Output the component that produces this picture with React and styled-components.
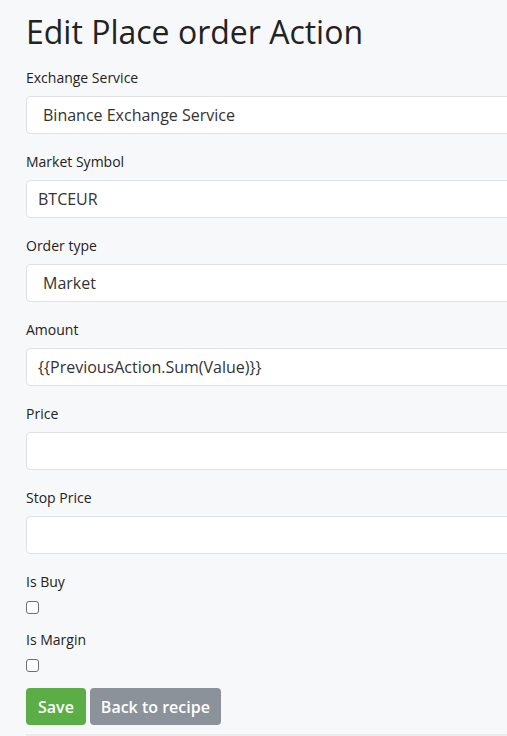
import React from "react"
import styled, { createGlobalStyle } from "styled-components"

const GlobalStyle = createGlobalStyle`
    html, body {
        margin: 0;
        padding: 0;
        background: #f7f8fa;
        font-family: "Open Sans", "Liberation Sans", sans-serif;
        color: #212529;
        overflow-x: hidden;
    }
    * {
        box-sizing: border-box;
    }
`

const Page = styled.div`
    padding: 9px 0 0 26px;
    width: 620px;
    min-height: 736px;
`

const Title = styled.h1`
    margin: 0 0 12px;
    font-size: 32px;
    font-weight: 400;
    line-height: 46px;
    color: #222;
`

const Group = styled.div`
    margin-bottom: ${(props) => props.$gap || "17px"};
`

const Label = styled.label`
    display: block;
    font-size: 14px;
    line-height: 21px;
    margin-bottom: ${(props) => (props.$check ? "9px" : "8px")};
    color: #222;
`

const Field = styled.input`
    display: block;
    width: 100%;
    height: 38px;
    padding: 0 11px;
    font-family: inherit;
    font-size: 16px;
    color: #333;
    background: #fff;
    border: 1px solid #dfe1e4;
    border-radius: 4px;
    outline: none;
`

const Select = styled.select`
    display: block;
    width: 100%;
    height: 38px;
    padding: 0 0 0 16px;
    font-family: inherit;
    font-size: 16px;
    color: #333;
    background: #fff;
    border: 1px solid #dfe1e4;
    border-radius: 4px;
    appearance: none;
    outline: none;
`

const Check = styled.input`
    appearance: none;
    display: block;
    margin: 0;
    width: 13px;
    height: 13px;
    border: 1px solid #6e6e6e;
    border-radius: 3px;
    background: #fff;
`

const Actions = styled.div`
    display: flex;
    gap: 4px;
`

const Button = styled.button`
    height: 37px;
    padding: 0 ${(props) => (props.$wide ? "11px" : "12px")};
    font-family: inherit;
    font-size: 16px;
    font-weight: 600;
    color: #fff;
    border: none;
    border-radius: 4px;
    background: ${(props) => (props.$variant === "save" ? "#5aae45" : "#8b9299")};
`

const Footer = styled.div`
    margin-top: 9px;
    height: 4px;
    background: linear-gradient(#e8e9eb, #f1f2f4);
`

const fields = [
    { label: "Exchange Service", value: "Binance Exchange Service", select: true },
    { label: "Market Symbol", value: "BTCEUR" },
    { label: "Order type", value: "Market", select: true },
    { label: "Amount", value: "{{PreviousAction.Sum(Value)}}" },
    { label: "Price", value: "" },
    { label: "Stop Price", value: "" },
]

export default function App() {
    return (
        <>
            <GlobalStyle />
            <Page>
                <Title>Edit Place order Action</Title>
                {fields.map((f) => (
                    <Group key={f.label}>
                        <Label>{f.label}</Label>
                        {f.select ? (
                            <Select defaultValue={f.value}>
                                <option>{f.value}</option>
                            </Select>
                        ) : (
                            <Field defaultValue={f.value} />
                        )}
                    </Group>
                ))}
                <Group $gap="15px">
                    <Label $check>Is Buy</Label>
                    <Check type="checkbox" />
                </Group>
                <Group $gap="16px">
                    <Label $check>Is Margin</Label>
                    <Check type="checkbox" />
                </Group>
                <Actions>
                    <Button $variant="save">Save</Button>
                    <Button $wide>Back to recipe</Button>
                </Actions>
                <Footer />
            </Page>
        </>
    )
}
